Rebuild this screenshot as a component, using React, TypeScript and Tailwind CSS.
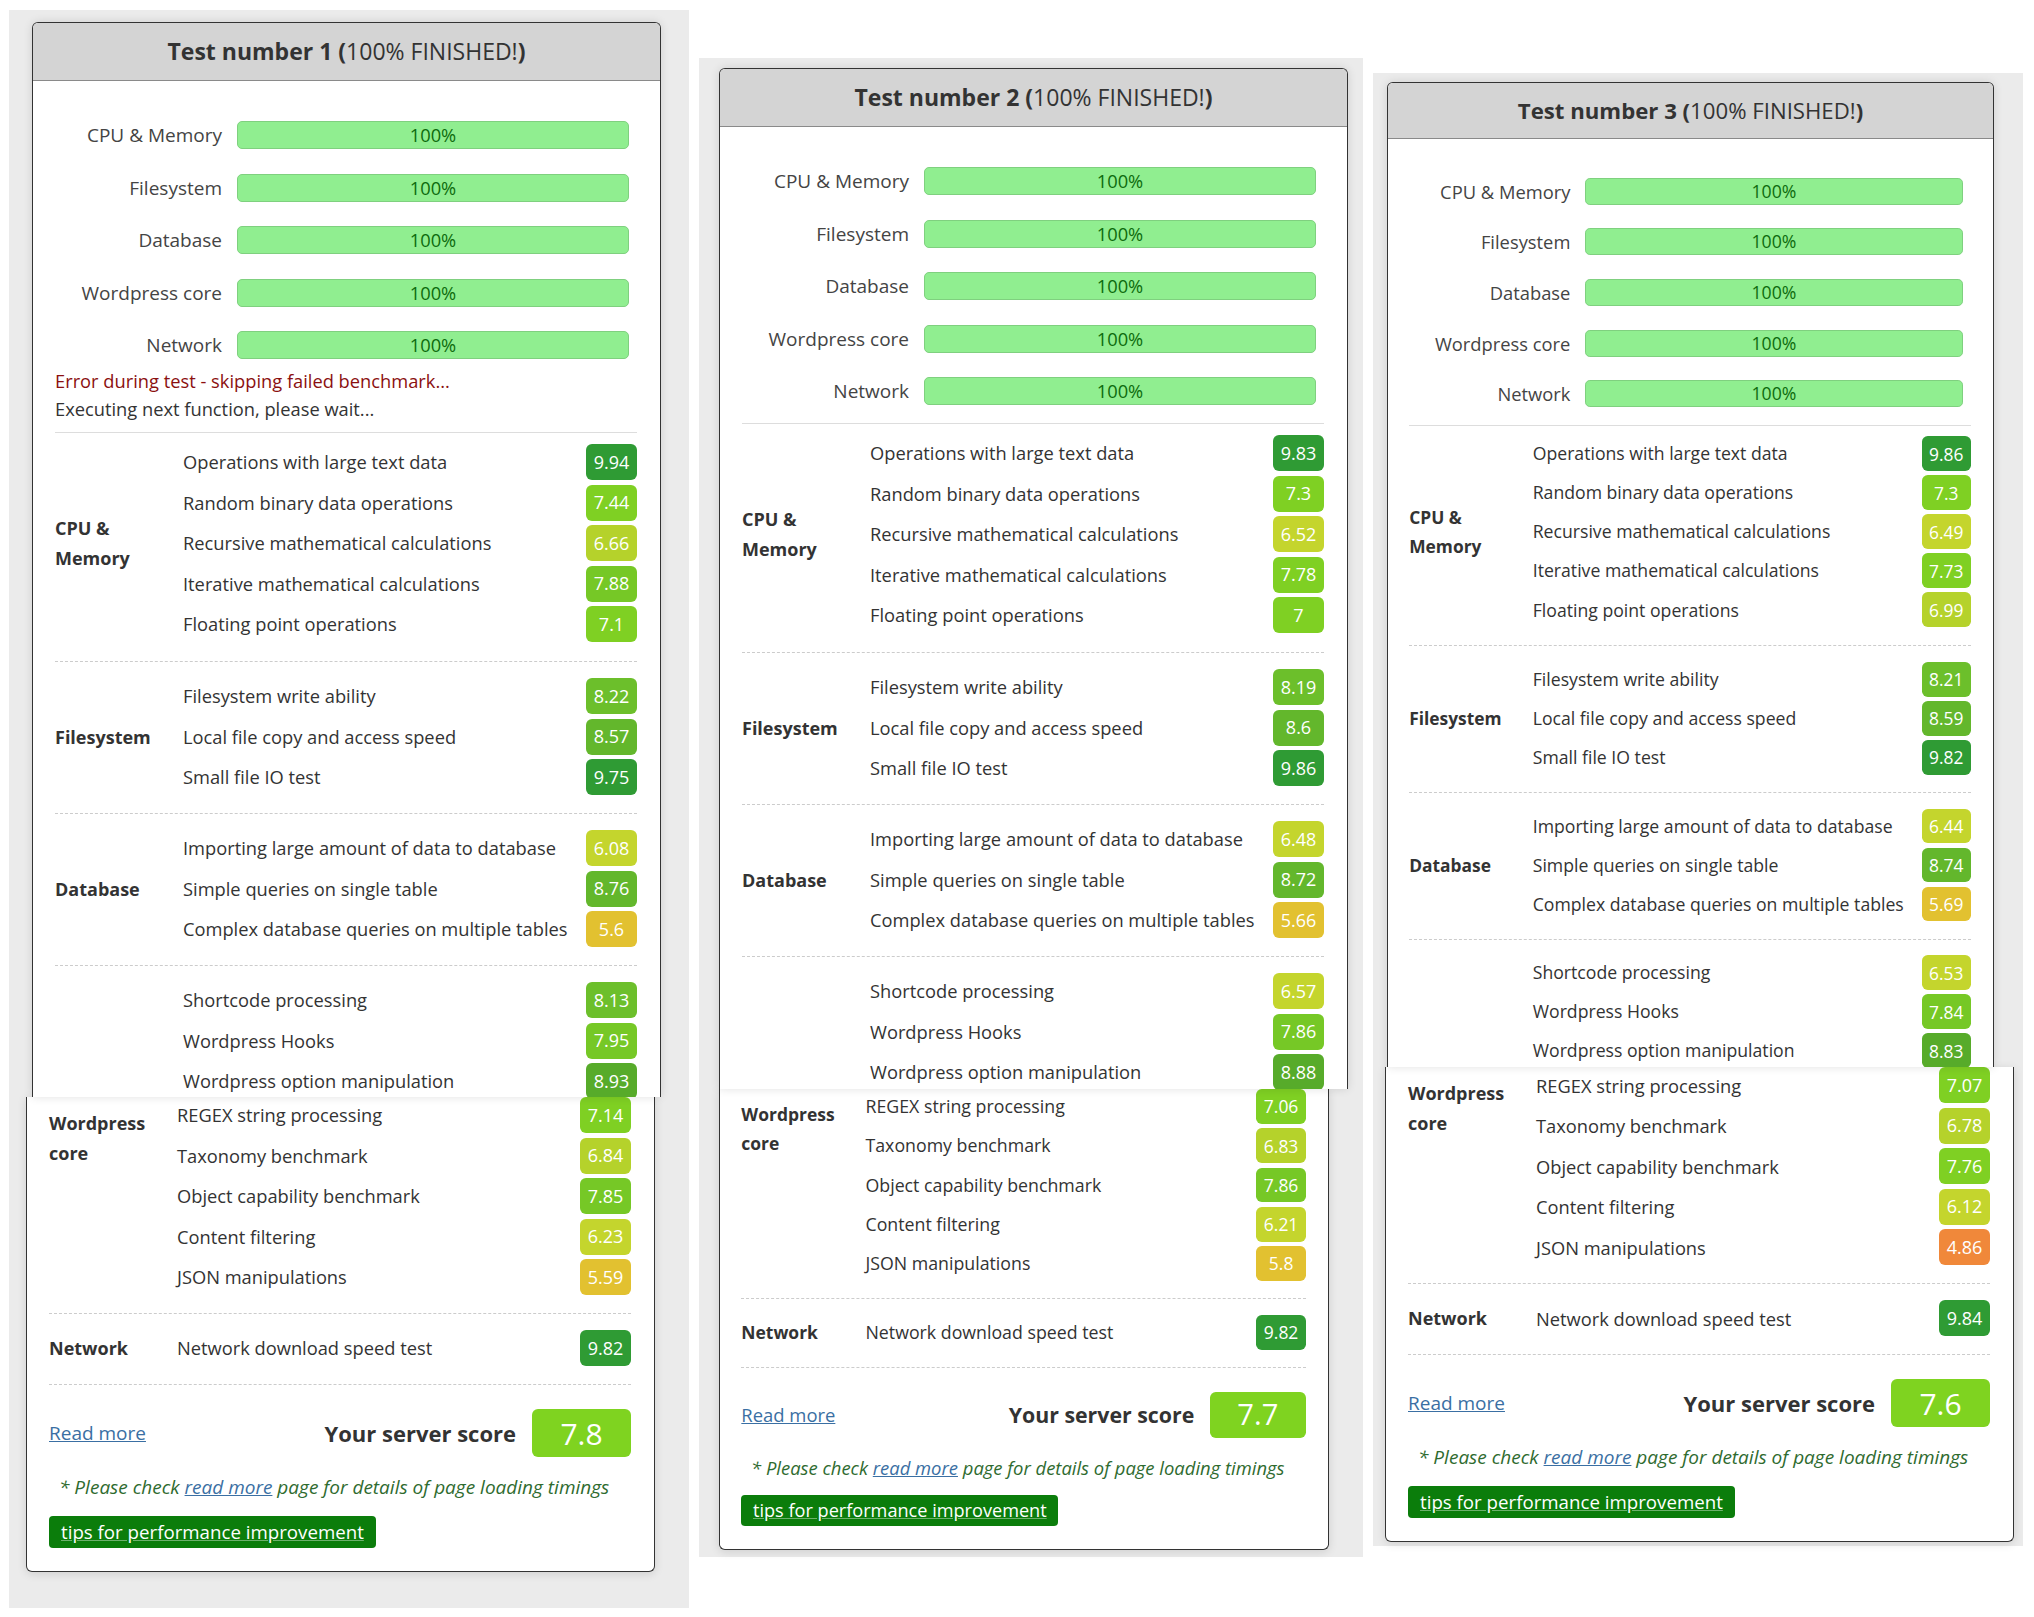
import type { ReactNode } from "react";

type TestRun = {
    n: number;
    cpu: number[];
    fs: number[];
    db: number[];
    wp: number[];
    net: number;
    score: number;
    error?: boolean;
};

const BARS = ["CPU & Memory", "Filesystem", "Database", "Wordpress core", "Network"];

const CPU_TESTS = [
    "Operations with large text data",
    "Random binary data operations",
    "Recursive mathematical calculations",
    "Iterative mathematical calculations",
    "Floating point operations",
];
const FS_TESTS = ["Filesystem write ability", "Local file copy and access speed", "Small file IO test"];
const DB_TESTS = [
    "Importing large amount of data to database",
    "Simple queries on single table",
    "Complex database queries on multiple tables",
];
const WP_TESTS = [
    "Shortcode processing",
    "Wordpress Hooks",
    "Wordpress option manipulation",
    "REGEX string processing",
    "Taxonomy benchmark",
    "Object capability benchmark",
    "Content filtering",
    "JSON manipulations",
];

const RUNS: TestRun[] = [
    {
        n: 1,
        cpu: [9.94, 7.44, 6.66, 7.88, 7.1],
        fs: [8.22, 8.57, 9.75],
        db: [6.08, 8.76, 5.6],
        wp: [8.13, 7.95, 8.93, 7.14, 6.84, 7.85, 6.23, 5.59],
        net: 9.82,
        score: 7.8,
        error: true,
    },
    {
        n: 2,
        cpu: [9.83, 7.3, 6.52, 7.78, 7],
        fs: [8.19, 8.6, 9.86],
        db: [6.48, 8.72, 5.66],
        wp: [6.57, 7.86, 8.88, 7.06, 6.83, 7.86, 6.21, 5.8],
        net: 9.82,
        score: 7.7,
    },
    {
        n: 3,
        cpu: [9.86, 7.3, 6.49, 7.73, 6.99],
        fs: [8.21, 8.59, 9.82],
        db: [6.44, 8.74, 5.69],
        wp: [6.53, 7.84, 8.83, 7.07, 6.78, 7.76, 6.12, 4.86],
        net: 9.84,
        score: 7.6,
    },
];

// score -> badge colour, orange to dark green
function badgeColor(v: number) {
    if (v >= 9.5) return "bg-[#2f9b34]";
    if (v >= 8.8) return "bg-[#57ab2a]";
    if (v >= 8.5) return "bg-[#63b72c]";
    if (v >= 8) return "bg-[#6cbf2b]";
    if (v >= 7.8) return "bg-[#76c826]";
    if (v >= 7) return "bg-[#7fd023]";
    if (v >= 6.6) return "bg-[#b5d22b]";
    if (v >= 6) return "bg-[#c4d52d]";
    if (v >= 5.5) return "bg-[#e2c130]";
    return "bg-[#f0883a]";
}

function Row({ name, value }: { name: string; value: number }) {
    return (
        <div className="flex h-[36px] items-center justify-between">
            <span>{name}</span>
            <span
                className={`flex h-[36px] w-[51px] items-center justify-center rounded-[6px] text-[18px] text-white ${badgeColor(value)}`}
            >
                {value}
            </span>
        </div>
    );
}

function Section({
    label,
    names,
    values,
    className,
    labelClass = "items-center",
}: {
    label: ReactNode;
    names: string[];
    values: number[];
    className: string;
    labelClass?: string;
}) {
    return (
        <div className={`flex ${className}`}>
            <div className={`flex w-[128px] shrink-0 text-[18px] font-bold leading-[30px] ${labelClass}`}>
                <div>{label}</div>
            </div>
            <div className="flex flex-1 flex-col gap-[4.5px]">
                {names.map((n, i) => (
                    <Row key={n} name={n} value={values[i]} />
                ))}
            </div>
        </div>
    );
}

// upper half of a result card: header, progress bars and most of the table
function CardTop({ run, height }: { run: TestRun; height: string }) {
    return (
        <div
            className={`relative z-10 w-[629px] overflow-hidden rounded-t-[6px] border border-b-0 border-[#333] bg-white shadow-[0_0_10px_rgba(0,0,0,0.12)] ${height}`}
        >
            <div className="flex h-[58px] items-center justify-center border-b border-[#8a8a8a] bg-[#d4d4d4] text-[23px] text-[#333]">
                <span className="font-bold">Test number {run.n} (</span>
                <span>100% FINISHED!</span>
                <span className="font-bold">)</span>
            </div>
            <div className="pl-[22px] pr-[23px]">
                <div className="flex flex-col gap-[24.5px] pt-[40px]">
                    {BARS.map((b) => (
                        <div key={b} className="flex h-[28px] items-center leading-[28px]">
                            <div className="w-[167px] text-right text-[19px] text-[#444]">{b}</div>
                            <div className="ml-[15px] flex h-[28px] w-[392px] items-center justify-center rounded-[5px] border border-[#7fd07f] bg-[#90ee90] text-[#0d6b0d]">
                                100%
                            </div>
                        </div>
                    ))}
                </div>
                {run.error ? (
                    <>
                        <div className="mt-[8px] leading-[28px]">
                            <div className="text-[#8b1010]">Error during test - skipping failed benchmark...</div>
                            <div>Executing next function, please wait...</div>
                        </div>
                        <div className="mt-[9px] border-t border-[#dddddd]" />
                    </>
                ) : (
                    <div className="mt-[18px] border-t border-[#dddddd]" />
                )}
                <Section
                    label={
                        <>
                            CPU &amp;
                            <br />
                            Memory
                        </>
                    }
                    names={CPU_TESTS}
                    values={run.cpu}
                    className="border-b border-dashed border-[#cccccc] pb-[19px] pt-[11px]"
                />
                <Section
                    label="Filesystem"
                    names={FS_TESTS}
                    values={run.fs}
                    className="border-b border-dashed border-[#cccccc] pb-[18px] pt-[16px]"
                />
                <Section
                    label="Database"
                    names={DB_TESTS}
                    values={run.db}
                    className="border-b border-dashed border-[#cccccc] pb-[18px] pt-[16px]"
                />
                <Section label="" names={WP_TESTS.slice(0, 3)} values={run.wp.slice(0, 3)} className="pt-[16px]" />
            </div>
        </div>
    );
}

// lower half: rest of the wordpress rows, network and the total score
function CardBottom({ run }: { run: TestRun }) {
    return (
        <div className="w-[629px] rounded-b-[6px] border border-t-0 border-[#333] bg-white pb-[23px] pl-[22px] pr-[23px] shadow-[0_2px_10px_rgba(0,0,0,0.12)]">
            <Section
                label={
                    <>
                        Wordpress
                        <br />
                        core
                    </>
                }
                labelClass="items-start pt-[11px]"
                names={WP_TESTS.slice(3)}
                values={run.wp.slice(3)}
                className="border-b border-dashed border-[#cccccc] pb-[18px]"
            />
            <Section
                label="Network"
                names={["Network download speed test"]}
                values={[run.net]}
                className="border-b border-dashed border-[#cccccc] pb-[18px] pt-[16px]"
            />
            <div className="mt-[24px] flex h-[48px] items-center justify-between">
                <a className="text-[19px] text-[#3a6fa3] underline">Read more</a>
                <div className="flex items-center gap-[16px]">
                    <span className="text-[22px] font-bold text-[#333]">Your server score</span>
                    <span className="flex h-[48px] w-[99px] items-center justify-center rounded-[6px] bg-[#7fd320] text-[30px] text-white">
                        {run.score}
                    </span>
                </div>
            </div>
            <p className="mt-[15px] pl-[10px] text-[19px] leading-[30px] text-[#2f6b2f] italic">
                * Please check <a className="text-[#3a6fa3] underline">read more</a> page for details of page loading
                timings
            </p>
            <div className="mt-[14px] flex h-[32px] w-fit items-center rounded-[4px] bg-[#0b7d0b] px-[12px] text-[18.7px] text-white underline decoration-white/40">
                tips for performance improvement
            </div>
        </div>
    );
}

export default function App() {
    const [r1, r2, r3] = RUNS;
    return (
        <div className="flex h-[1617px] w-[2034px] items-start bg-white font-['Open_Sans',sans-serif] text-[18.3px] text-[#333]">
            {/* run 1 */}
            <div className="ml-[9px] mt-[10px] h-[1598px] w-[680px] bg-[#ebebeb] pt-[12px]">
                <div className="ml-[23px]">
                    <CardTop run={r1} height="h-[1075px]" />
                </div>
                <div className="ml-[17px]">
                    <CardBottom run={r1} />
                </div>
            </div>

            {/* run 2 */}
            <div className="ml-[10px] mt-[58px] h-[1499px] w-[664px] bg-[#ebebeb] pt-[10px]">
                <div className="ml-[20px]">
                    <CardTop run={r2} height="h-[1021px]" />
                </div>
                <div className="ml-[20px]">
                    <div className="[zoom:0.97]">
                        <CardBottom run={r2} />
                    </div>
                </div>
            </div>

            {/* run 3 */}
            <div className="ml-[10px] mt-[73px] h-[1473px] w-[650px] bg-[#ebebeb] pt-[9px]">
                <div className="ml-[14px]">
                    <div className="[zoom:0.965]">
                        <CardTop run={r3} height="h-[1021px]" />
                    </div>
                </div>
                <div className="ml-[12px]">
                    <CardBottom run={r3} />
                </div>
            </div>
        </div>
    );
}
